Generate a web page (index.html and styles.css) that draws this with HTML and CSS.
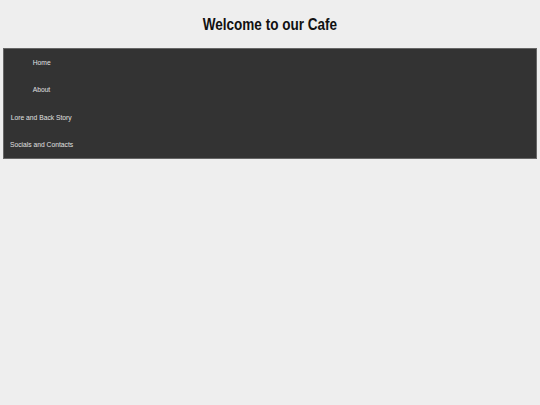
FILE: index.html
```html
<!DOCTYPE html>
<html>
<head>
<meta charset="utf-8">
<link rel="stylesheet" href="styles.css">
</head>
<body>
<header class="top">
  <h1 class="title"><span class="narrow">Welcome to our Cafe</span></h1>
</header>
<nav class="nav">
  <ul class="menu">
    <li class="item"><a class="link" href="#">Home</a></li>
    <li class="item"><a class="link" href="#">About</a></li>
    <li class="item"><a class="link" href="#">Lore and Back Story</a></li>
    <li class="item"><a class="link" href="#">Socials and Contacts</a></li>
  </ul>
</nav>
</body>
</html>
```
FILE: styles.css
```css
html, body {
  margin: 0;
  padding: 0;
  background: #eeeeee;
  font-family: "Liberation Sans", Arial, sans-serif;
}
.top {
  padding: 12px 0 0;
  height: 36px;
}
.title {
  margin: 0;
  text-align: center;
  font-size: 16.5px;
  font-weight: bold;
  color: #111;
  line-height: 24px;
}
.narrow {
  display: inline-block;
  transform: scaleX(0.82);
}
.nav {
  margin: 0 3px;
  background: #333333;
  border: 1px solid #666;
  height: 109px;
}
.menu {
  list-style: none;
  margin: 0;
  padding: 0;
  width: 75px;
  display: flex;
  flex-direction: column;
}
.item {
  height: 27.25px;
  display: flex;
  align-items: center;
  justify-content: center;
}
.link {
  display: inline-block;
  color: #e0e0e0;
  text-decoration: none;
  font-size: 8px;
  white-space: nowrap;
  transform: scaleX(0.84);
}
```
